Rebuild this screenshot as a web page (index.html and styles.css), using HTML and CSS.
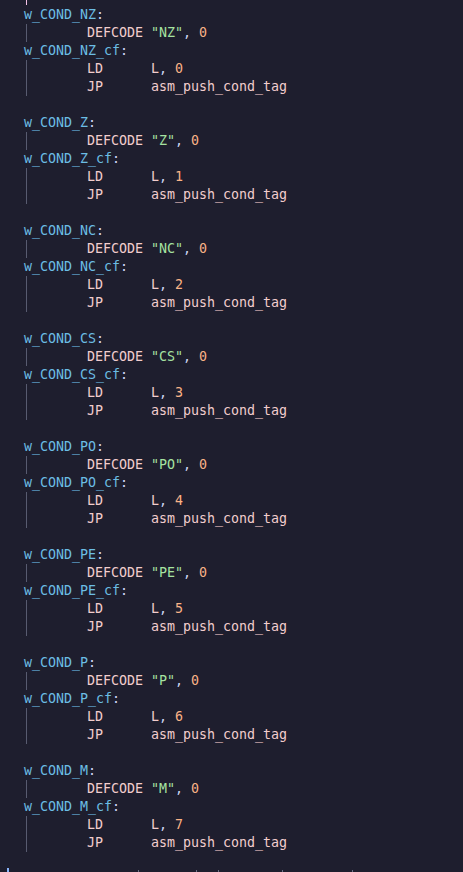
FILE: index.html
```html
<!DOCTYPE html>
<html>
<head>
<meta charset="utf-8">
<link rel="stylesheet" href="styles.css">
</head>
<body>
<div class="editor">
  <div class="row top"><span class="guide pink"></span></div>

  <div class="row"><span class="lbl">w_COND_NZ</span><span class="p">:</span></div>
  <div class="row ind"><span class="guide"></span><span class="op">DEFCODE</span><span class="str">"NZ"</span><span class="p">, </span><span class="num">0</span></div>
  <div class="row"><span class="lbl">w_COND_NZ_cf</span><span class="p">:</span></div>
  <div class="row ind"><span class="guide"></span><span class="op">LD</span><span class="arg">L<span class="p">, </span><span class="num">0</span></span></div>
  <div class="row ind"><span class="guide"></span><span class="op">JP</span><span class="arg">asm_push_cond_tag</span></div>
  <div class="row"></div>

  <div class="row"><span class="lbl">w_COND_Z</span><span class="p">:</span></div>
  <div class="row ind"><span class="guide"></span><span class="op">DEFCODE</span><span class="str">"Z"</span><span class="p">, </span><span class="num">0</span></div>
  <div class="row"><span class="lbl">w_COND_Z_cf</span><span class="p">:</span></div>
  <div class="row ind"><span class="guide"></span><span class="op">LD</span><span class="arg">L<span class="p">, </span><span class="num">1</span></span></div>
  <div class="row ind"><span class="guide"></span><span class="op">JP</span><span class="arg">asm_push_cond_tag</span></div>
  <div class="row"></div>

  <div class="row"><span class="lbl">w_COND_NC</span><span class="p">:</span></div>
  <div class="row ind"><span class="guide"></span><span class="op">DEFCODE</span><span class="str">"NC"</span><span class="p">, </span><span class="num">0</span></div>
  <div class="row"><span class="lbl">w_COND_NC_cf</span><span class="p">:</span></div>
  <div class="row ind"><span class="guide"></span><span class="op">LD</span><span class="arg">L<span class="p">, </span><span class="num">2</span></span></div>
  <div class="row ind"><span class="guide"></span><span class="op">JP</span><span class="arg">asm_push_cond_tag</span></div>
  <div class="row"></div>

  <div class="row"><span class="lbl">w_COND_CS</span><span class="p">:</span></div>
  <div class="row ind"><span class="guide"></span><span class="op">DEFCODE</span><span class="str">"CS"</span><span class="p">, </span><span class="num">0</span></div>
  <div class="row"><span class="lbl">w_COND_CS_cf</span><span class="p">:</span></div>
  <div class="row ind"><span class="guide"></span><span class="op">LD</span><span class="arg">L<span class="p">, </span><span class="num">3</span></span></div>
  <div class="row ind"><span class="guide"></span><span class="op">JP</span><span class="arg">asm_push_cond_tag</span></div>
  <div class="row"></div>

  <div class="row"><span class="lbl">w_COND_PO</span><span class="p">:</span></div>
  <div class="row ind"><span class="guide"></span><span class="op">DEFCODE</span><span class="str">"PO"</span><span class="p">, </span><span class="num">0</span></div>
  <div class="row"><span class="lbl">w_COND_PO_cf</span><span class="p">:</span></div>
  <div class="row ind"><span class="guide"></span><span class="op">LD</span><span class="arg">L<span class="p">, </span><span class="num">4</span></span></div>
  <div class="row ind"><span class="guide"></span><span class="op">JP</span><span class="arg">asm_push_cond_tag</span></div>
  <div class="row"></div>

  <div class="row"><span class="lbl">w_COND_PE</span><span class="p">:</span></div>
  <div class="row ind"><span class="guide"></span><span class="op">DEFCODE</span><span class="str">"PE"</span><span class="p">, </span><span class="num">0</span></div>
  <div class="row"><span class="lbl">w_COND_PE_cf</span><span class="p">:</span></div>
  <div class="row ind"><span class="guide"></span><span class="op">LD</span><span class="arg">L<span class="p">, </span><span class="num">5</span></span></div>
  <div class="row ind"><span class="guide"></span><span class="op">JP</span><span class="arg">asm_push_cond_tag</span></div>
  <div class="row"></div>

  <div class="row"><span class="lbl">w_COND_P</span><span class="p">:</span></div>
  <div class="row ind"><span class="guide"></span><span class="op">DEFCODE</span><span class="str">"P"</span><span class="p">, </span><span class="num">0</span></div>
  <div class="row"><span class="lbl">w_COND_P_cf</span><span class="p">:</span></div>
  <div class="row ind"><span class="guide"></span><span class="op">LD</span><span class="arg">L<span class="p">, </span><span class="num">6</span></span></div>
  <div class="row ind"><span class="guide"></span><span class="op">JP</span><span class="arg">asm_push_cond_tag</span></div>
  <div class="row"></div>

  <div class="row"><span class="lbl">w_COND_M</span><span class="p">:</span></div>
  <div class="row ind"><span class="guide"></span><span class="op">DEFCODE</span><span class="str">"M"</span><span class="p">, </span><span class="num">0</span></div>
  <div class="row"><span class="lbl">w_COND_M_cf</span><span class="p">:</span></div>
  <div class="row ind"><span class="guide"></span><span class="op">LD</span><span class="arg">L<span class="p">, </span><span class="num">7</span></span></div>
  <div class="row ind"><span class="guide"></span><span class="op">JP</span><span class="arg">asm_push_cond_tag</span></div>
  <div class="row"></div>

  <div class="peek">
    <span class="cursor"></span>
    <span class="tick t1"></span>
    <span class="tick t2"></span>
    <span class="tick t3"></span>
    <span class="tick t4"></span>
    <span class="tick t5"></span>
  </div>
</div>
</body>
</html>
```

FILE: styles.css
```css
html, body {
  margin: 0;
  padding: 0;
  background: #1e1e2e;
  overflow: hidden;
}
.editor {
  width: 463px;
  height: 872px;
  overflow: hidden;
  font-family: "DejaVu Sans Mono", monospace;
  font-size: 13.3px;
  color: #f2cdcd;
}
.row {
  position: relative;
  height: 18px;
  line-height: 17px;
  padding-left: 24px;
  white-space: pre;
}
.row.top {
  height: 6px;
}
.row.ind {
  padding-left: 87px;
}
.guide {
  position: absolute;
  left: 26px;
  top: 0;
  bottom: 0;
  width: 1px;
  background: #585b70;
}
.guide.pink {
  background: #f5c2e7;
  bottom: 1px;
}
.lbl { color: #6cbde4; }
.p { color: #cdd6f4; }
.op {
  display: inline-block;
  width: 64px;
}
.str { color: #a6e3a1; }
.num { color: #fab387; }
.peek {
  position: relative;
  height: 3px;
  margin-top: -2px;
}
.cursor {
  position: absolute;
  left: 7px;
  top: 0;
  width: 2px;
  height: 4px;
  background: #89b4fa;
}
.tick {
  position: absolute;
  top: 2px;
  width: 1px;
  height: 2px;
  background: #6c7086;
}
.t1 { left: 138px; }
.t2 { left: 196px; }
.t3 { left: 218px; }
.t4 { left: 282px; }
.t5 { left: 352px; }
```
